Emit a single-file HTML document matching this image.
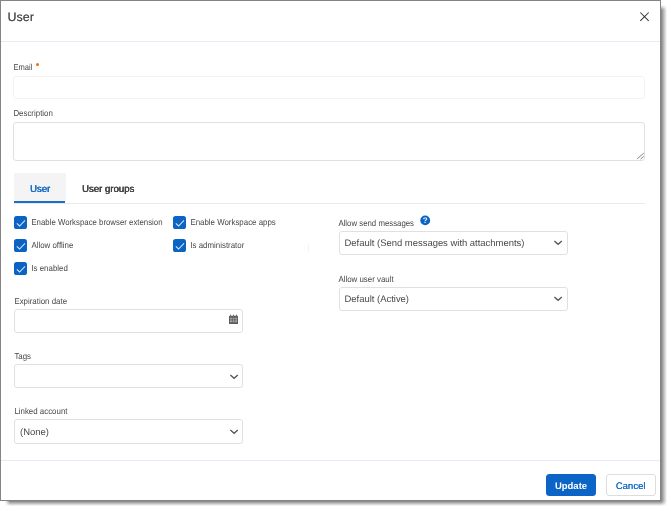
<!DOCTYPE html>
<html>
<head>
<meta charset="utf-8">
<title>User</title>
<style>
html,body{margin:0;padding:0;}
body{text-rendering:geometricPrecision;width:671px;height:511px;background:#fff;position:relative;overflow:hidden;font-family:"Liberation Sans",sans-serif;color:#444;}
.sh{position:absolute;}
.sh.r{left:661px;top:10px;width:5.8px;height:491px;background:linear-gradient(to right,#808080,rgba(128,128,128,0));}
.sh.b{left:10px;top:501px;width:651px;height:5.4px;background:linear-gradient(to bottom,#808080,rgba(128,128,128,0));}
.sh.tr{left:661px;top:4.6px;width:5.8px;height:5.4px;background:linear-gradient(to right,#808080,rgba(128,128,128,0));-webkit-mask-image:linear-gradient(to top,#000,transparent);mask-image:linear-gradient(to top,#000,transparent);}
.sh.bl{left:4.6px;top:501px;width:5.4px;height:5.4px;background:linear-gradient(to bottom,#808080,rgba(128,128,128,0));-webkit-mask-image:linear-gradient(to left,#000,transparent);mask-image:linear-gradient(to left,#000,transparent);}
.sh.br{left:661px;top:501px;width:5.8px;height:5.4px;background:linear-gradient(to right,#808080,rgba(128,128,128,0));-webkit-mask-image:linear-gradient(to bottom,#000,transparent);mask-image:linear-gradient(to bottom,#000,transparent);}
.dlg{position:absolute;left:0;top:0;width:659px;height:499px;background:#fff;border:1px solid #848484;}
.abs{position:absolute;}
.title{left:7.6px;top:9px;font-size:12.3px;line-height:16px;color:#444;text-shadow:0.2px 0 0 rgba(68,68,68,0.6);letter-spacing:0.1px}
.hline{left:1px;width:659px;height:1px;background:#e4edf5;}
.lbl{font-size:8.6px;line-height:10px;color:#484848;white-space:nowrap;transform:translate(-0.6px,-1.1px) scaleX(0.918);transform-origin:0 50%;}
.inp{box-sizing:border-box;border:1px solid #e0e0e0;border-radius:3px;background:#fff;}
.seltxt{font-size:9.45px;line-height:12px;color:#484848;white-space:nowrap;}
.tab{font-size:10px;line-height:12px;white-space:nowrap;text-shadow:0.3px 0 0 currentColor,-0.1px 0 0 currentColor;transform:translateY(0.6px) scaleX(0.96);transform-origin:0 50%}
.btn{box-sizing:border-box;border-radius:3px;font-size:9.5px;line-height:12px;text-align:center;}
</style>
</head>
<body>
<div id="root" style="position:absolute;left:0;top:0;width:671px;height:511px;filter:blur(0.4px)">
<div class="sh r"></div><div class="sh b"></div><div class="sh tr"></div><div class="sh bl"></div><div class="sh br"></div>
<div class="dlg"></div>

<div class="abs title">User</div>
<svg class="abs" style="left:639px;top:11px" width="11" height="11" viewBox="0 0 11 11"><path d="M1.3 1.5 L9.7 9.9 M9.7 1.5 L1.3 9.9" stroke="#333" stroke-width="1.05" fill="none"/></svg>
<div class="abs hline" style="top:41px"></div>

<div class="abs lbl" style="left:13.7px;top:63px;transform:translate(-0.6px,-1.1px) scaleX(0.88)">Email</div>
<div class="abs" style="left:36px;top:63px;width:3px;height:3px;border-radius:50%;background:#e8710a"></div>
<div class="abs inp" style="left:13px;top:76px;width:632px;height:23px;border-color:#f3f3f3"></div>

<div class="abs lbl" style="left:13.7px;top:109px">Description</div>
<div class="abs inp" style="left:13px;top:122px;width:632px;height:39px"></div>
<svg class="abs" style="left:635.5px;top:151px" width="9" height="9" viewBox="0 0 9 9"><path d="M1.2 7.8 L7.8 2.1 M4.6 8.1 L7.8 5.4" stroke="#777" stroke-width="0.9" fill="none"/></svg>

<div class="abs" style="left:14px;top:173px;width:52px;height:29px;background:#f4f4f4"></div>
<div class="abs" style="left:14px;top:203px;width:630.6px;height:1px;background:#eaeaea"></div>
<div class="abs" style="left:14px;top:201px;width:51px;height:2px;background:#1a6fc9"></div>
<div class="abs tab" style="left:30px;top:183px;color:#1a6fc9">User</div>
<div class="abs tab" style="left:81.5px;top:183px;color:#444">User groups</div>

<!-- checkboxes -->
<svg width="0" height="0" style="position:absolute"><defs><symbol id="ck" viewBox="0 0 13 13"><rect x="0" y="0" width="13" height="13" rx="2.6" fill="#0b63c4"/><path d="M2.8 7.3 L5.6 10 L11 4.3" stroke="#d4e6f8" stroke-width="1.05" fill="none"/></symbol></defs></svg>
<svg class="abs" style="left:14px;top:216px" width="13" height="13"><use href="#ck"/></svg>
<svg class="abs" style="left:14px;top:239px" width="13" height="13"><use href="#ck"/></svg>
<svg class="abs" style="left:14px;top:262px" width="13" height="13"><use href="#ck"/></svg>
<svg class="abs" style="left:173px;top:216px" width="13" height="13"><use href="#ck"/></svg>
<svg class="abs" style="left:173px;top:239px" width="13" height="13"><use href="#ck"/></svg>
<div class="abs lbl" style="left:31.8px;top:218px;transform:translate(-0.6px,-1.1px) scaleX(0.91)">Enable Workspace browser extension</div>
<div class="abs lbl" style="left:31.8px;top:241px">Allow offline</div>
<div class="abs lbl" style="left:31.8px;top:264px">Is enabled</div>
<div class="abs lbl" style="left:191px;top:218px">Enable Workspace apps</div>
<div class="abs lbl" style="left:191px;top:241px">Is administrator</div>

<div class="abs" style="left:308px;top:244px;width:1px;height:8px;background:#f3f3f3"></div>
<!-- right column -->
<div class="abs lbl" style="left:339.4px;top:219px;transform:translate(-0.6px,-1.1px) scaleX(0.91)">Allow send messages</div>
<svg class="abs" style="left:420px;top:215px" width="11" height="11" viewBox="0 0 11 11"><circle cx="5.2" cy="5.4" r="4.9" fill="#0b63c4"/><text x="5.2" y="8.1" text-anchor="middle" font-family="Liberation Sans, sans-serif" font-weight="bold" font-size="8" fill="#e8f1fb">?</text></svg>
<div class="abs inp" style="left:339px;top:231px;width:229px;height:24px"></div>
<div class="abs seltxt" style="left:344.5px;top:238px">Default (Send messages with attachments)</div>
<svg class="abs" style="left:553px;top:239px" width="10" height="7" viewBox="0 0 10 7"><path d="M1.4 1.9 L5.1 5.3 L8.8 1.9" stroke="#555" stroke-width="1.3" fill="none"/></svg>

<div class="abs lbl" style="left:339.4px;top:275px">Allow user vault</div>
<div class="abs inp" style="left:339px;top:287px;width:229px;height:24px"></div>
<div class="abs seltxt" style="left:344.5px;top:294px">Default (Active)</div>
<svg class="abs" style="left:553px;top:295px" width="10" height="7" viewBox="0 0 10 7"><path d="M1.4 1.9 L5.1 5.3 L8.8 1.9" stroke="#555" stroke-width="1.3" fill="none"/></svg>

<!-- left column -->
<div class="abs lbl" style="left:14.9px;top:297px">Expiration date</div>
<div class="abs inp" style="left:14px;top:309px;width:229px;height:24px"></div>
<svg class="abs" style="left:229px;top:314px" width="9" height="10" viewBox="0 0 9 10"><rect x="0" y="1.7" width="9" height="8.3" rx="0.5" fill="#5c5c5c"/><rect x="1" y="0.6" width="1" height="2" fill="#777"/><rect x="4" y="0.6" width="1" height="2" fill="#777"/><rect x="7" y="0.6" width="1" height="2" fill="#777"/><path d="M1 3.8h1.9v1.8H1zM3.6 3.8h1.9v1.8H3.6zM6.2 3.8h1.9v1.8H6.2zM1 6.3h1.9v2H1zM3.6 6.3h1.9v2H3.6zM6.2 6.3h1.9v2H6.2z" fill="#a8a8a8"/></svg>

<div class="abs lbl" style="left:14.9px;top:352px">Tags</div>
<div class="abs inp" style="left:14px;top:364px;width:229px;height:24px"></div>
<svg class="abs" style="left:229px;top:373px" width="10" height="7" viewBox="0 0 10 7"><path d="M1.4 1.9 L5.1 5.3 L8.8 1.9" stroke="#555" stroke-width="1.3" fill="none"/></svg>

<div class="abs lbl" style="left:14.9px;top:407px">Linked account</div>
<div class="abs inp" style="left:14px;top:419px;width:229px;height:25px"></div>
<div class="abs seltxt" style="left:20px;top:427px">(None)</div>
<svg class="abs" style="left:229px;top:428px" width="10" height="7" viewBox="0 0 10 7"><path d="M1.4 1.9 L5.1 5.3 L8.8 1.9" stroke="#555" stroke-width="1.3" fill="none"/></svg>

<div class="abs hline" style="top:460px"></div>
<div class="abs" style="left:546px;top:474px;width:50px;height:22px;background:#0b64c6;border-radius:3.5px"></div>
<div class="abs btn" style="left:546px;top:474px;width:50px;height:22px;color:#fff;font-weight:bold;padding-top:6.6px">Update</div>
<div class="abs" style="left:606px;top:474px;width:50px;height:22px;box-sizing:border-box;border:1px solid #ddd;border-radius:3px"></div>
<div class="abs btn" style="left:606px;top:474px;width:50px;height:22px;color:#1a6fc9;padding-top:6.6px;padding-right:1px;text-shadow:0.25px 0 0 #1a6fc9">Cancel</div>
</div>
</body>
</html>
